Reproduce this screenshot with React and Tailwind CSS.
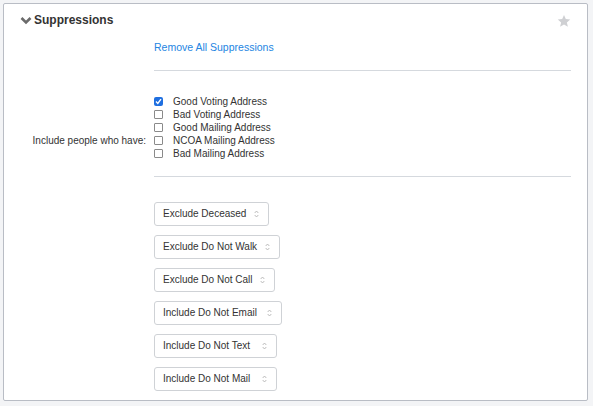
import React from 'react';

const addressOptions = [
  { label: 'Good Voting Address', checked: true },
  { label: 'Bad Voting Address', checked: false },
  { label: 'Good Mailing Address', checked: false },
  { label: 'NCOA Mailing Address', checked: false },
  { label: 'Bad Mailing Address', checked: false },
];

const selects = [
  { label: 'Exclude Deceased', width: 'w-[115px]' },
  { label: 'Exclude Do Not Walk', width: 'w-[126px]' },
  { label: 'Exclude Do Not Call', width: 'w-[121px]' },
  { label: 'Include Do Not Email', width: 'w-[128px]' },
  { label: 'Include Do Not Text', width: 'w-[123px]' },
  { label: 'Include Do Not Mail', width: 'w-[123px]' },
];

const Checkbox = ({ checked }) =>
  checked ? (
    <span className="flex h-[9px] w-[9px] items-center justify-center rounded-[2px] bg-[#1f6fe0]">
      <svg width="7" height="7" viewBox="0 0 7 7">
        <path d="M1 3.6 L2.8 5.4 L6 1.2" stroke="white" strokeWidth="1.4" fill="none" />
      </svg>
    </span>
  ) : (
    <span className="h-[9px] w-[9px] rounded-[1px] border border-[#8a8a8a] bg-white" />
  );

const UpDown = () => (
  <svg width="5" height="8" viewBox="0 0 5 8">
    <path d="M0.7 3 L2.5 1 L4.3 3 M0.7 5 L2.5 7 L4.3 5" stroke="#b5b5b5" strokeWidth="0.9" fill="none" />
  </svg>
);

export default function App() {
  return (
    <div className="min-h-[406px] bg-[#f3f4f6] pt-[3px] pl-[3px] font-['Liberation_Sans',Arial,sans-serif] text-[#333]">
      <div className="h-[398px] w-[585px] rounded-[2px] border border-[#b9bdc5] bg-white">
        {/* header */}
        <div className="flex items-center justify-between pt-[9px] pl-[16px] pr-[16px]">
          <div className="flex items-center gap-[2px]">
            <svg width="12" height="9" viewBox="0 0 12 9">
              <path d="M1.5 2 L6 6.5 L10.5 2" stroke="#6b6b6b" strokeWidth="2.6" fill="none" />
            </svg>
            <span className="text-[12px] leading-[15px] font-bold text-[#333]">Suppressions</span>
          </div>
          <svg width="14" height="14" viewBox="0 0 24 24">
            <path
              d="M12 1.5l3.1 7.1 7.6.7-5.8 5.1 1.8 7.5L12 17.9 5.3 21.9l1.8-7.5L1.3 9.3l7.6-.7z"
              fill="#cfd0d3"
            />
          </svg>
        </div>

        <div className="ml-[150px] mr-[16px]">
          <div className="mt-[12px] text-[10.5px] leading-[14px] text-[#2385e2]">Remove All Suppressions</div>
          <div className="mt-[16px] h-px bg-[#d5d9de]" />
        </div>

        {/* address checkboxes */}
        <div className="mt-[24px] flex">
          <div className="w-[143px] self-end pb-[13px] pr-[1px] text-right text-[10px] leading-[13px]">
            Include people who have:
          </div>
          <div className="ml-[7px] flex flex-col">
            {addressOptions.map((opt) => (
              <div key={opt.label} className="flex h-[13px] items-center">
                <Checkbox checked={opt.checked} />
                <span className="ml-[10px] text-[10px] leading-[13px]">{opt.label}</span>
              </div>
            ))}
          </div>
        </div>

        <div className="ml-[150px] mr-[16px]">
          <div className="mt-[16px] h-px bg-[#d5d9de]" />
          <div className="mt-[25px] flex flex-col gap-[9px]">
            {selects.map((s) => (
              <div
                key={s.label}
                className={`flex h-[24px] items-center justify-between rounded-[3px] border border-[#cfd2d6] bg-white pl-[8px] pr-[9px] ${s.width}`}
              >
                <span className="text-[10px] leading-[12px] text-[#333]">{s.label}</span>
                <UpDown />
              </div>
            ))}
          </div>
        </div>
      </div>
    </div>
  );
}
